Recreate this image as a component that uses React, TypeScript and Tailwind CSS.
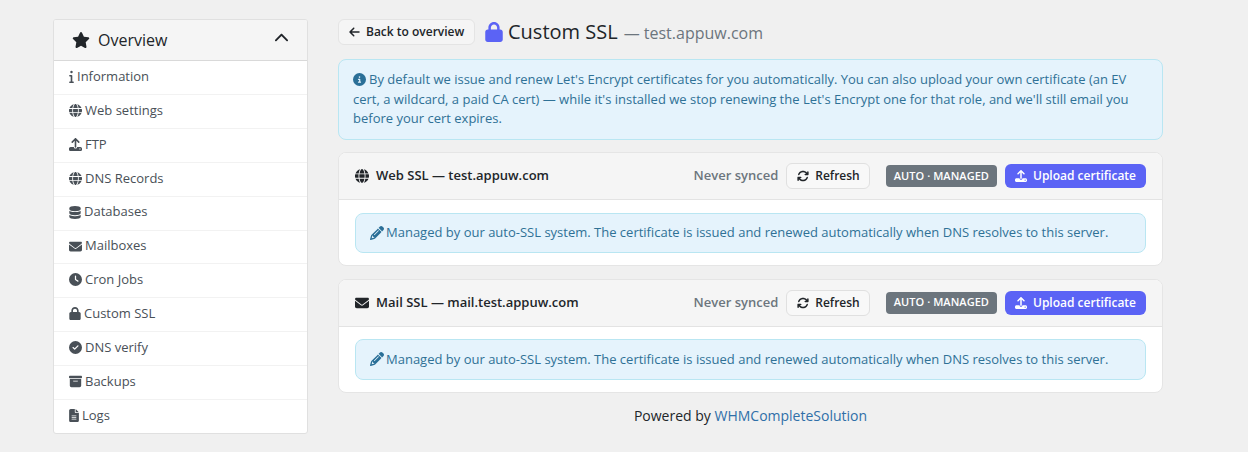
import React from 'react';
import { FaStar, FaChevronUp, FaInfo, FaGlobe, FaUpload, FaDatabase, FaEnvelope, FaClock, FaLock, FaCircleCheck, FaBoxArchive, FaFileLines, FaArrowsRotate, FaPencil, FaCircleInfo, FaArrowLeft } from 'react-icons/fa6';

const navItems = [
  { label: 'Information', icon: FaInfo, iconWidth: 'w-[5px]' },
  { label: 'Web settings', icon: FaGlobe, iconWidth: 'w-[13px]' },
  { label: 'FTP', icon: FaUpload, iconWidth: 'w-[13px]' },
  { label: 'DNS Records', icon: FaGlobe, iconWidth: 'w-[13px]' },
  { label: 'Databases', icon: FaDatabase, iconWidth: 'w-[12px]' },
  { label: 'Mailboxes', icon: FaEnvelope, iconWidth: 'w-[13px]' },
  { label: 'Cron Jobs', icon: FaClock, iconWidth: 'w-[13px]' },
  { label: 'Custom SSL', icon: FaLock, iconWidth: 'w-[12px]' },
  { label: 'DNS verify', icon: FaCircleCheck, iconWidth: 'w-[13px]' },
  { label: 'Backups', icon: FaBoxArchive, iconWidth: 'w-[13px]' },
  { label: 'Logs', icon: FaFileLines, iconWidth: 'w-[10px]' },
];

const SslCard: React.FC<{ title: string; icon: React.ElementType }> = ({ title, icon: Icon }) => (
  <section className="rounded-[8px] border border-[#e5e5e5] bg-white overflow-hidden">
    <div className="h-[47px] flex items-center justify-between pl-4 pr-4 bg-[#f5f5f5] border-b border-[#e3e3e3]">
      <div className="flex items-center gap-[7px] text-[13px] font-semibold text-[#212529]">
        <Icon className="h-[14px] w-[14px]" />
        <span>{title}</span>
      </div>
      <div className="flex items-center">
        <span className="text-[13px] font-semibold text-[#6c757d]">Never synced</span>
        <button className="ml-2 h-[26px] pl-[10px] pr-[9px] flex items-center gap-[6px] rounded-[6px] border border-[#e0e0e0] bg-[#f8f8f8] text-[12px] font-semibold text-[#212529]">
          <FaArrowsRotate className="h-[12px] w-[12px]" />
          Refresh
        </button>
        <span className="ml-4 h-[22px] px-2 flex items-center rounded-[4px] bg-[#6c757d] text-[11px] font-semibold tracking-[0.05px] text-white">AUTO · MANAGED</span>
        <button className="ml-2 h-[24px] px-[10px] flex items-center gap-[6px] rounded-[6px] bg-[#5b63f5] text-[12px] font-semibold text-white">
          <FaUpload className="h-[12px] w-[12px]" />
          Upload certificate
        </button>
      </div>
    </div>
    <div className="pt-[12.5px] pb-[12px] px-4">
      <div className="h-[40.5px] flex items-center gap-[2px] px-[14px] rounded-[8px] border border-[#b9e6f2] bg-[#e5f3fc] text-[13px] text-[#2f7196]">
        <FaPencil className="h-[14px] w-[14px] text-[#2a6f97]" />
        <span>Managed by our auto-SSL system. The certificate is issued and renewed automatically when DNS resolves to this server.</span>
      </div>
    </div>
  </section>
);

export default function App() {
  return (
    <div className="w-[1248px] h-[452px] bg-[#f0f0f0] overflow-hidden flex pl-[53px] pt-[19px] font-['Open_Sans','Noto_Sans',sans-serif]">
      <aside className="w-[255px] h-[415px] shrink-0 self-start overflow-hidden rounded-[3px] border border-[#e0e0e0] bg-white">
        <div className="h-[41.15px] flex items-center justify-between pl-[18px] pr-[18px] pb-[1px] bg-[#f5f5f5] border-b border-[#d9d9d9]">
          <div className="flex items-center gap-[8px] text-[16px] text-[#212529]">
            <FaStar className="h-[16px] w-[18px]" />
            Overview
          </div>
          <FaChevronUp className="h-[15px] w-[15px] text-[#212529] -mt-[3px]" />
        </div>
        {navItems.map((item, i) => (
          <div
            key={item.label}
            className={`h-[33.9px] flex items-center gap-[3px] pl-[15px] pb-[2px] text-[13px] text-[#495057] ${i < navItems.length - 1 ? 'border-b border-[#f2f2f2]' : ''}`}
          >
            <item.icon className={`h-[13px] text-[#495057] ${item.iconWidth}`} />
            {item.label}
          </div>
        ))}
      </aside>

      <main className="w-[825px] ml-[30px]">
        <div className="h-[26px] flex items-center">
          <button className="h-[26px] w-[137px] pl-[10px] flex items-center gap-[6px] rounded-[6px] border border-[#e4e4e4] bg-[#f5f5f5] text-[12px] font-semibold text-[#212529]">
            <FaArrowLeft className="h-[12px] w-[11px]" />
            Back to overview
          </button>
          <FaLock className="ml-[10px] h-[20px] w-[18px] text-[#5b63f5]" />
          <h1 className="ml-[5px] text-[20px] text-[#212529]">Custom SSL</h1>
          <span className="ml-[6px] mt-[2px] text-[16px] text-[#6c757d]">— test.appuw.com</span>
        </div>

        <div className="mt-[14px] rounded-[8px] border border-[#b9e6f2] bg-[#e5f3fc] px-[14px] py-[10px] text-[13px] leading-[19.5px] text-[#2f7196]">
          <FaCircleInfo className="inline h-[13px] w-[13px] text-[#2a6f97] mb-[2px] mr-[3px]" />
          By default we issue and renew Let's Encrypt certificates for you automatically. You can also upload your own certificate (an EV cert, a wildcard, a paid CA cert) — while it's installed we stop renewing the Let's Encrypt one for that role, and we'll still email you before your cert expires.
        </div>

        <div className="mt-[12.5px] flex flex-col gap-[12.5px]">
          <SslCard title="Web SSL — test.appuw.com" icon={FaGlobe} />
          <SslCard title="Mail SSL — mail.test.appuw.com" icon={FaEnvelope} />
        </div>

        <p className="mt-[12px] text-center text-[14px] text-[#212529]">
          Powered by <span className="text-[#2f6fa8]">WHMCompleteSolution</span>
        </p>
      </main>
    </div>
  );
}
